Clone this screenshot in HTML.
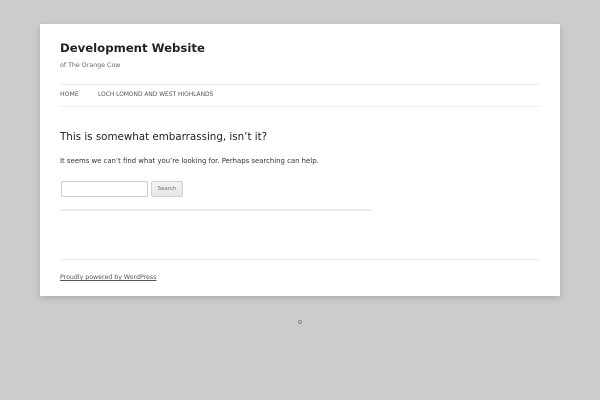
<!DOCTYPE html>
<html><head><style>
body{margin:0;background:#ccc;width:600px;height:400px;font-family:"DejaVu Sans",sans-serif;color:#444;position:relative;overflow:hidden}
.page{position:absolute;left:40px;top:24px;width:520px;height:272px;background:#fff;box-shadow:0 2px 6px rgba(100,100,100,.3)}
.abs{position:absolute;white-space:nowrap}
.line{position:absolute;height:1px;background:#ededed}
</style></head><body>
<div class="page">
<div class="abs" style="left:20px;top:17px;font-size:11.7px;font-weight:bold;color:#222">Development Website</div>
<div class="abs" style="left:20px;top:38px;font-size:6.3px;color:#666">of The Orange Cow</div>
<div class="line" style="left:20px;top:60px;width:480px"></div>
<div class="abs" style="left:20px;top:67px;font-size:6.2px;color:#555">HOME</div>
<div class="abs" style="left:58px;top:68px;font-size:5.9px;color:#555">LOCH LOMOND AND WEST HIGHLANDS</div>
<div class="line" style="left:20px;top:82px;width:480px"></div>
<div class="abs" style="left:20px;top:107px;font-size:10.3px;color:#222">This is somewhat embarrassing, isn’t it?</div>
<div class="abs" style="left:20px;top:133px;font-size:6.9px;color:#333">It seems we can’t find what you’re looking for. Perhaps searching can help.</div>
<div style="position:absolute;left:21px;top:157px;width:85px;height:14px;border:1px solid #ccc;border-radius:2px"></div>
<div style="position:absolute;left:111px;top:157px;width:30px;height:14px;border:1px solid #d2d2d2;border-radius:2px;background:linear-gradient(#f4f4f4,#e6e6e6);font-size:5.5px;color:#6c6c6c;text-align:center;line-height:14px">Search</div>
<div class="line" style="left:20px;top:185px;width:312px;height:2px;background:#ececec"></div>
<div class="line" style="left:20px;top:235px;width:480px"></div>
<div class="abs" style="left:20px;top:250px;font-size:6.25px;color:#555;text-decoration:underline">Proudly powered by WordPress</div>
</div>
<div style="position:absolute;left:298px;top:320px;width:2px;height:2px;border:1px solid #888;border-radius:50%"></div>
</body></html>
